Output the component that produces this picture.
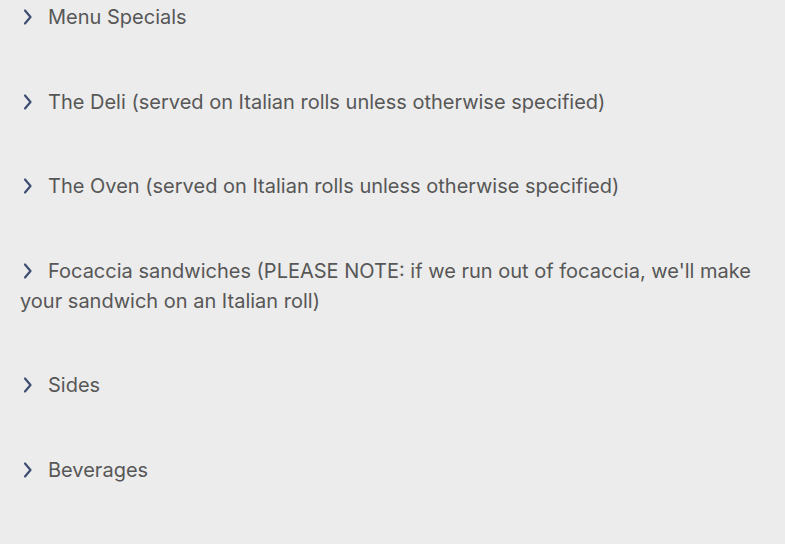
import React from "react";

const items = [
  "Menu Specials",
  "The Deli (served on Italian rolls unless otherwise specified)",
  "The Oven (served on Italian rolls unless otherwise specified)",
  "Focaccia sandwiches (PLEASE NOTE: if we run out of focaccia, we'll make your sandwich on an Italian roll)",
  "Sides",
  "Beverages",
];

function Chevron() {
  return (
    <svg width="14" height="18" viewBox="0 0 14 18" className="inline-block mr-[14px] align-[-2px]">
      <path d="M5 2.5 L10.5 9 L5 15.5" fill="none" stroke="#3e4d72" strokeWidth="2.2" strokeLinecap="round" strokeLinejoin="round" />
    </svg>
  );
}

export default function App() {
  return (
    <div className="w-[785px] h-[544px] overflow-hidden bg-[#ececec] pl-[20px] pr-[20px] pt-[2px]" style={{ fontFamily: "Inter, 'Noto Sans', sans-serif" }}>
      {items.map((t) => (
        <div key={t} className="text-[20px] leading-[30px] text-[#575757] mb-[54.6px]">
          <Chevron />
          {t}
        </div>
      ))}
    </div>
  );
}
